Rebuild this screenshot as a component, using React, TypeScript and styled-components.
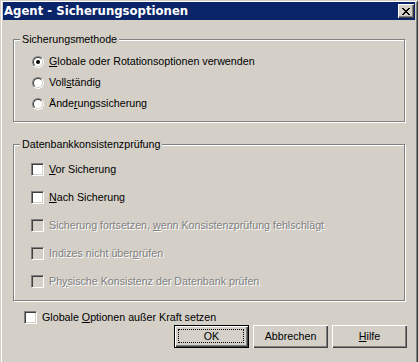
import React from "react";
import styled, { createGlobalStyle } from "styled-components";

const GlobalStyle = createGlobalStyle`
  html, body {
    margin: 0;
    padding: 0;
    background: #d4d0c8;
    overflow: hidden;
  }
`;

const Window = styled.div`
  width: 418px;
  height: 372px;
  box-sizing: border-box;
  padding: 2px 3px 0 3px;
  background: #d4d0c8;
  overflow: hidden;
  box-shadow: inset 1px 1px 0 #d4d0c8, inset -1px -1px 0 #404040,
    inset 2px 2px 0 #ffffff, inset -2px -2px 0 #808080;
  font-family: "Liberation Sans", Arial, sans-serif;
  font-size: 10.7px;
  color: #000;
`;

const TitleBar = styled.div`
  height: 18px;
  background: #0a246a;
  display: flex;
  align-items: center;
  justify-content: space-between;
  padding: 0 1px 0 1px;
`;

const TitleText = styled.span`
  font-family: "DejaVu Sans", Verdana, sans-serif;
  font-weight: bold;
  font-size: 11.7px;
  color: #fff;
  white-space: nowrap;
`;

const CloseButton = styled.div`
  width: 16px;
  height: 14px;
  box-sizing: border-box;
  background: #d4d0c8;
  display: flex;
  align-items: center;
  justify-content: center;
  box-shadow: inset 1px 1px 0 #ffffff, inset -1px -1px 0 #404040,
    inset -2px -2px 0 #808080;
`;

const Content = styled.div`
  display: flex;
  flex-direction: column;
  padding: 0 10px;
`;

const Group = styled.fieldset<{ $top: number }>`
  margin: ${(p) => p.$top}px 0 0 0;
  padding: 0;
  border: 1px solid #808080;
  box-shadow: inset 1px 1px 0 #ffffff, 1px 1px 0 #ffffff;
  min-width: 0;
`;

const Legend = styled.legend`
  margin-left: 6px;
  padding: 0 2px;
  line-height: 13px;
  background: #d4d0c8;
`;

const Rows = styled.div<{ $pt: number; $pb: number }>`
  display: flex;
  flex-direction: column;
  padding: ${(p) => p.$pt}px 0 ${(p) => p.$pb}px 0;
`;

const Row = styled.div<{ $h: number; $indent: number; $gap: number; $top?: number }>`
  height: ${(p) => p.$h}px;
  margin-top: ${(p) => p.$top ?? 0}px;
  display: flex;
  align-items: center;
  padding-left: ${(p) => p.$indent}px;
  gap: ${(p) => p.$gap}px;
  white-space: nowrap;
`;

const Label = styled.span<{ $disabled?: boolean }>`
  color: ${(p) => (p.$disabled ? "#808080" : "#000")};
  text-shadow: ${(p) => (p.$disabled ? "1px 1px 0 #ffffff" : "none")};
  line-height: 13px;

  u {
    text-decoration-thickness: 1px;
    text-underline-offset: 1px;
  }
`;

const RadioOuter = styled.span`
  width: 12px;
  height: 12px;
  box-sizing: border-box;
  border-radius: 50%;
  border: 1px solid;
  border-color: #808080 #ffffff #ffffff #808080;
  display: flex;
  flex-shrink: 0;
`;

const RadioInner = styled.span`
  flex: 1;
  border-radius: 50%;
  border: 1px solid;
  border-color: #404040 #d4d0c8 #d4d0c8 #404040;
  background: #fff;
  display: flex;
  align-items: center;
  justify-content: center;
`;

const RadioDot = styled.span`
  width: 4px;
  height: 4px;
  border-radius: 50%;
  background: #000;
`;

const CheckBox = styled.span<{ $disabled?: boolean }>`
  width: 13px;
  height: 13px;
  box-sizing: border-box;
  flex-shrink: 0;
  background: ${(p) => (p.$disabled ? "#d4d0c8" : "#ffffff")};
  border: 1px solid;
  border-color: #808080 #ffffff #ffffff #808080;
  box-shadow: inset 1px 1px 0 #404040, inset -1px -1px 0 #d4d0c8;
`;

const ButtonRow = styled.div`
  display: flex;
  justify-content: flex-end;
  gap: 4px;
  margin: 1px -2px 0 0;
`;

const Button = styled.div<{ $default?: boolean }>`
  width: 75px;
  height: 23px;
  box-sizing: border-box;
  display: flex;
  align-items: center;
  justify-content: center;
  position: relative;
  background: #d4d0c8;
  border: ${(p) => (p.$default ? "1px solid #000" : "none")};
  box-shadow: inset 1px 1px 0 #ffffff, inset -1px -1px 0 #404040,
    inset -2px -2px 0 #808080;
`;

const FocusRing = styled.span`
  position: absolute;
  inset: 3px 4px 4px 3px;
  border: 1px dotted #000;
`;

const Radio = ({ checked }: { checked?: boolean }) => (
  <RadioOuter>
    <RadioInner>{checked && <RadioDot />}</RadioInner>
  </RadioOuter>
);

const methods: { pre: string; key: string; post: string; checked?: boolean }[] = [
  { pre: "", key: "G", post: "lobale oder Rotationsoptionen verwenden", checked: true },
  { pre: "Voll", key: "s", post: "tändig" },
  { pre: "Ände", key: "r", post: "ungssicherung" },
];

const checks: { pre: string; key: string; post: string; disabled?: boolean }[] = [
  { pre: "", key: "V", post: "or Sicherung" },
  { pre: "", key: "N", post: "ach Sicherung" },
  {
    pre: "Sicherung fortsetzen, ",
    key: "w",
    post: "enn Konsistenzprüfung fehlschlägt",
    disabled: true,
  },
  { pre: "Indizes nicht über", key: "p", post: "rüfen", disabled: true },
  { pre: "Ph", key: "y", post: "sische Konsistenz der Datenbank prüfen", disabled: true },
];

export default function App() {
  return (
    <>
      <GlobalStyle />
      <Window>
        <TitleBar>
          <TitleText>Agent - Sicherungsoptionen</TitleText>
          <CloseButton>
            <svg width="8" height="7" viewBox="0 0 8 7" shapeRendering="crispEdges">
              <path
                d="M0 0h2v1h-2zM6 0h2v1h-2zM1 1h2v1h-2zM5 1h2v1h-2zM2 2h4v1h-4zM3 3h2v1h-2zM2 4h4v1h-4zM1 5h2v1h-2zM5 5h2v1h-2zM0 6h2v1h-2zM6 6h2v1h-2z"
                fill="#000"
              />
            </svg>
          </CloseButton>
        </TitleBar>
        <Content>
          <Group $top={13}>
            <Legend>Sicherungsmethode</Legend>
            <Rows $pt={5} $pb={7}>
              {methods.map((m) => (
                <Row key={m.key} $h={21} $indent={18} $gap={5}>
                  <Radio checked={m.checked} />
                  <Label>
                    {m.pre}
                    <u>{m.key}</u>
                    {m.post}
                  </Label>
                </Row>
              ))}
            </Rows>
          </Group>
          <Group $top={16}>
            <Legend>Datenbankkonsistenzprüfung</Legend>
            <Rows $pt={4} $pb={5}>
              {checks.map((c) => (
                <Row key={c.pre + c.key} $h={28} $indent={17} $gap={5}>
                  <CheckBox $disabled={c.disabled} />
                  <Label $disabled={c.disabled}>
                    {c.pre}
                    <u>{c.key}</u>
                    {c.post}
                  </Label>
                </Row>
              ))}
            </Rows>
          </Group>
          <Row $h={13} $indent={11} $gap={5} $top={10}>
            <CheckBox />
            <Label>
              Globale <u>O</u>ptionen außer Kraft setzen
            </Label>
          </Row>
          <ButtonRow>
            <Button $default>
              <FocusRing />
              <Label>OK</Label>
            </Button>
            <Button>
              <Label>Abbrechen</Label>
            </Button>
            <Button>
              <Label>
                <u>H</u>ilfe
              </Label>
            </Button>
          </ButtonRow>
        </Content>
      </Window>
    </>
  );
}
